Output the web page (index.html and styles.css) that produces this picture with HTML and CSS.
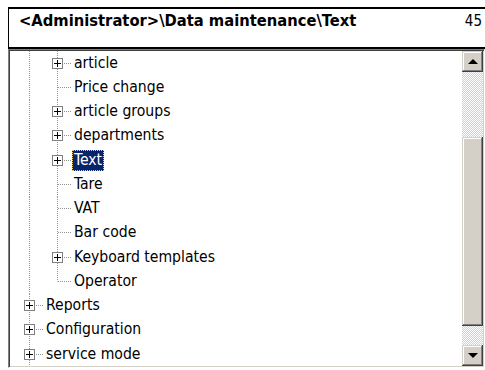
FILE: index.html
```html
<!DOCTYPE html>
<html lang="en">
<head>
    <meta charset="UTF-8">
    <title>Data maintenance</title>
    <link rel="stylesheet" href="styles.css">
</head>
<body>
    <div class="window">
        <div class="header">
            <span class="title">&lt;Administrator&gt;\Data maintenance\Text</span>
            <span class="count">45</span>
        </div>
        <div class="treebox">
            <ul class="tree">
                <li class="node">
                    <span class="cell pipe"></span>
                    <span class="cell tee"><svg class="plus" width="11" height="11" viewBox="0 0 11 11"><rect x="0.5" y="0.5" width="10" height="10" fill="#fff" stroke="#7f7f7f"/><path d="M2 5.5h7M5.5 2v7" stroke="#000"/></svg></span>
                    <span class="label">article</span>
                </li>
                <li class="node">
                    <span class="cell pipe"></span>
                    <span class="cell tee"></span>
                    <span class="label">Price change</span>
                </li>
                <li class="node">
                    <span class="cell pipe"></span>
                    <span class="cell tee"><svg class="plus" width="11" height="11" viewBox="0 0 11 11"><rect x="0.5" y="0.5" width="10" height="10" fill="#fff" stroke="#7f7f7f"/><path d="M2 5.5h7M5.5 2v7" stroke="#000"/></svg></span>
                    <span class="label">article groups</span>
                </li>
                <li class="node">
                    <span class="cell pipe"></span>
                    <span class="cell tee"><svg class="plus" width="11" height="11" viewBox="0 0 11 11"><rect x="0.5" y="0.5" width="10" height="10" fill="#fff" stroke="#7f7f7f"/><path d="M2 5.5h7M5.5 2v7" stroke="#000"/></svg></span>
                    <span class="label">departments</span>
                </li>
                <li class="node">
                    <span class="cell pipe"></span>
                    <span class="cell tee"><svg class="plus" width="11" height="11" viewBox="0 0 11 11"><rect x="0.5" y="0.5" width="10" height="10" fill="#fff" stroke="#7f7f7f"/><path d="M2 5.5h7M5.5 2v7" stroke="#000"/></svg></span>
                    <span class="label selected">Text</span>
                </li>
                <li class="node">
                    <span class="cell pipe"></span>
                    <span class="cell tee"></span>
                    <span class="label">Tare</span>
                </li>
                <li class="node">
                    <span class="cell pipe"></span>
                    <span class="cell tee"></span>
                    <span class="label">VAT</span>
                </li>
                <li class="node">
                    <span class="cell pipe"></span>
                    <span class="cell tee"></span>
                    <span class="label">Bar code</span>
                </li>
                <li class="node">
                    <span class="cell pipe"></span>
                    <span class="cell tee"><svg class="plus" width="11" height="11" viewBox="0 0 11 11"><rect x="0.5" y="0.5" width="10" height="10" fill="#fff" stroke="#7f7f7f"/><path d="M2 5.5h7M5.5 2v7" stroke="#000"/></svg></span>
                    <span class="label">Keyboard templates</span>
                </li>
                <li class="node">
                    <span class="cell pipe"></span>
                    <span class="cell elbow"></span>
                    <span class="label">Operator</span>
                </li>
                <li class="node">
                    <span class="cell tee"><svg class="plus" width="11" height="11" viewBox="0 0 11 11"><rect x="0.5" y="0.5" width="10" height="10" fill="#fff" stroke="#7f7f7f"/><path d="M2 5.5h7M5.5 2v7" stroke="#000"/></svg></span>
                    <span class="label">Reports</span>
                </li>
                <li class="node">
                    <span class="cell tee"><svg class="plus" width="11" height="11" viewBox="0 0 11 11"><rect x="0.5" y="0.5" width="10" height="10" fill="#fff" stroke="#7f7f7f"/><path d="M2 5.5h7M5.5 2v7" stroke="#000"/></svg></span>
                    <span class="label">Configuration</span>
                </li>
                <li class="node">
                    <span class="cell tee"><svg class="plus" width="11" height="11" viewBox="0 0 11 11"><rect x="0.5" y="0.5" width="10" height="10" fill="#fff" stroke="#7f7f7f"/><path d="M2 5.5h7M5.5 2v7" stroke="#000"/></svg></span>
                    <span class="label">service mode</span>
                </li>
            </ul>
            <div class="scrollbar">
                <div class="sb-btn"><span class="arrow-up"></span></div>
                <div class="sb-track sb-top"></div>
                <div class="sb-thumb"></div>
                <div class="sb-track sb-bottom"></div>
                <div class="sb-btn"><span class="arrow-down"></span></div>
            </div>
        </div>
    </div>
</body>
</html>
```

FILE: styles.css
```css
body {
    margin: 0;
    background-color: #fff;
    font-family: "DejaVu Sans Condensed", "DejaVu Sans", sans-serif;
    color: #000;
}

.window {
    padding: 7px 0 0 8px;
}

/* header with path */
.header {
    height: 42px;
    box-sizing: border-box;
    border-top: 2px solid #000;
    border-bottom: 2px solid #000;
    border-left: 1px solid #000;
    display: flex;
    justify-content: space-between;
    align-items: flex-start;
    padding: 2px 3px 0 10px;
}
.title {
    font-weight: bold;
    font-size: 16.4px;
    line-height: 20px;
}
.count {
    font-size: 15px;
    line-height: 20px;
}

/* tree */
.treebox {
    display: flex;
    height: 319px;
    box-sizing: border-box;
    padding: 1px;
    border: 1px solid;
    border-color: #808080 #fff #fff #808080;
    box-shadow: inset 1px 1px #404040, inset -1px -1px #d4d0c8;
}
.tree {
    flex: 1;
    margin: 0;
    padding: 0 0 0 5px;
    list-style: none;
    overflow: hidden;
}
.node {
    display: flex;
    align-items: center;
    height: 24.25px;
    font-size: 15.6px;
}
.cell {
    flex: none;
    width: 28px;
    height: 100%;
    display: flex;
    align-items: center;
}
.pipe {
    background: repeating-linear-gradient(to bottom, #929292 0 1px, transparent 1px 2px) 14px 0 / 1px 100% no-repeat;
}
.tee {
    background:
        repeating-linear-gradient(to bottom, #929292 0 1px, transparent 1px 2px) 14px 0 / 1px 100% no-repeat,
        repeating-linear-gradient(to right, #929292 0 1px, transparent 1px 2px) 15px 50% / 13px 1px no-repeat;
}
.elbow {
    background:
        repeating-linear-gradient(to bottom, #929292 0 1px, transparent 1px 2px) 14px 0 / 1px 50% no-repeat,
        repeating-linear-gradient(to right, #929292 0 1px, transparent 1px 2px) 15px 50% / 13px 1px no-repeat;
}
.plus {
    margin-left: 9px;
    display: block;
}
.label {
    margin-left: 1px;
    padding: 0 1px;
    border: 1px solid transparent;
    line-height: 19px;
    white-space: nowrap;
}
.label.selected {
    background-color: #0a246a;
    color: #fff;
    border: 1px dotted #e8d070;
}

/* scrollbar */
.scrollbar {
    flex: none;
    width: 21px;
    display: flex;
    flex-direction: column;
}
.sb-btn {
    flex: none;
    height: 21px;
    background-color: #d4d0c8;
    box-shadow: inset -1px -1px #404040, inset 1px 1px #d4d0c8, inset -2px -2px #808080, inset 2px 2px #fff;
    display: flex;
    align-items: center;
    justify-content: center;
}
.arrow-up {
    width: 0;
    height: 0;
    border-left: 5px solid transparent;
    border-right: 5px solid transparent;
    border-bottom: 5px solid #000;
}
.arrow-down {
    width: 0;
    height: 0;
    border-left: 5px solid transparent;
    border-right: 5px solid transparent;
    border-top: 5px solid #000;
}
.sb-track {
    background: repeating-conic-gradient(#d4d0c8 0 25%, #fff 0 50%) 0 0 / 2px 2px;
}
.sb-top {
    height: 65px;
}
.sb-bottom {
    flex: 1;
}
.sb-thumb {
    flex: none;
    height: 189px;
    background-color: #d4d0c8;
    box-shadow: inset -1px -1px #404040, inset 1px 1px #d4d0c8, inset -2px -2px #808080, inset 2px 2px #fff;
}
```
